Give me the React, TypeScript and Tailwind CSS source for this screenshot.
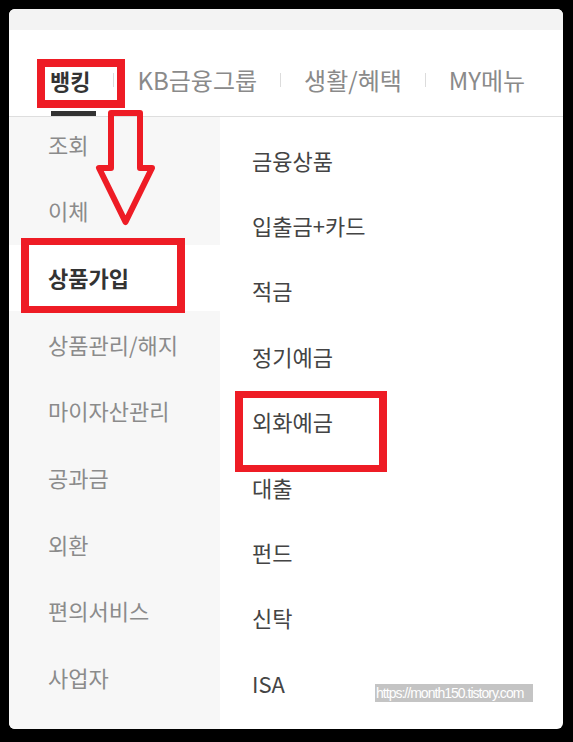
const tabs = ['KB금융그룹', '생활/혜택', 'MY메뉴'];

const leftMenu = [
  '조회',
  '이체',
  '상품가입',
  '상품관리/해지',
  '마이자산관리',
  '공과금',
  '외환',
  '편의서비스',
  '사업자',
];

const rightMenu = ['금융상품', '입출금+카드', '적금', '정기예금', '외화예금', '대출', '펀드', '신탁', 'ISA'];

function DownArrow() {
  return (
    <svg className="absolute left-[90px] top-[105px]" width="70" height="130" viewBox="90 105 70 130">
      <polygon
        points="111,113 140,113 140,168 152,168 125.5,222 99,168 111,168"
        fill="none"
        stroke="#ee1c25"
        strokeWidth="6"
        strokeLinejoin="round"
      />
    </svg>
  );
}

export default function App() {
  return (
    <div
      className="relative w-[573px] h-[742px] bg-black pt-[9px] pl-[9px]"
      style={{ fontFamily: '"Noto Sans CJK KR", "Noto Sans", sans-serif' }}
    >
      <div className="w-[554px] h-[720px] bg-white rounded-[6px] overflow-hidden flex flex-col">
        <div className="h-[21px] bg-[#f3f3f3] shrink-0" />

        <div className="relative h-[87px] shrink-0 flex items-center gap-[23px] pl-[41px] pt-[13px] border-b border-[#dedede]">
          <span className="relative text-[22px] font-bold text-[#333] leading-none">뱅킹</span>
          {tabs.map((t) => (
            <div key={t} className="flex items-center gap-[23px]">
              <span className="w-px h-[14px] bg-[#dcdcdc]" />
              <span className="text-[24px] text-[#8a8a8a] leading-none">{t}</span>
            </div>
          ))}
          <span className="absolute left-[42px] bottom-0 w-[45px] h-[5px] bg-[#333]" />
        </div>

        <div className="flex flex-1 min-h-0">
          <div className="w-[211px] bg-[#f7f7f7] flex flex-col">
            {leftMenu.map((m, i) => (
              <div
                key={m}
                className={
                  i === 0
                    ? 'h-[61px] pb-[7px] flex items-center pl-[39px]'
                    : m === '상품가입'
                      ? 'h-[66.7px] pb-[2px] flex items-center pl-[39px] bg-white'
                      : 'h-[66.7px] pb-[2px] flex items-center pl-[39px]'
                }
              >
                <span
                  className={
                    m === '상품가입'
                      ? 'text-[22px] font-bold text-[#333] leading-none'
                      : 'text-[22px] text-[#8b8b8b] leading-none'
                  }
                >
                  {m}
                </span>
              </div>
            ))}
          </div>

          <div className="flex-1 flex flex-col pt-[10px]">
            {rightMenu.map((m) => (
              <div key={m} className="h-[65.4px] flex items-center pl-[32px]">
                <span className="text-[22px] text-[#444] leading-none">{m}</span>
              </div>
            ))}
          </div>
        </div>
      </div>

      {/* annotations */}
      <div className="absolute left-[37px] top-[59px] w-[88px] h-[49px] border-[8px] border-[#ee1c25]" />
      <div className="absolute left-[21px] top-[238px] w-[164px] h-[75px] border-x-[8px] border-y-[7px] border-[#ee1c25]" />
      <div className="absolute left-[235px] top-[391px] w-[152px] h-[81px] border-x-[8px] border-y-[7px] border-[#ee1c25]" />
      <DownArrow />

      <div
        className="absolute left-[375px] top-[684px] w-[158px] h-[18px] bg-[#c4c4c4] text-white text-[14px] leading-[18px] tracking-[-0.07em] px-[1px] whitespace-nowrap overflow-hidden"
        style={{ fontFamily: '"Liberation Sans", sans-serif' }}
      >
        https://month150.tistory.com
      </div>
    </div>
  );
}
